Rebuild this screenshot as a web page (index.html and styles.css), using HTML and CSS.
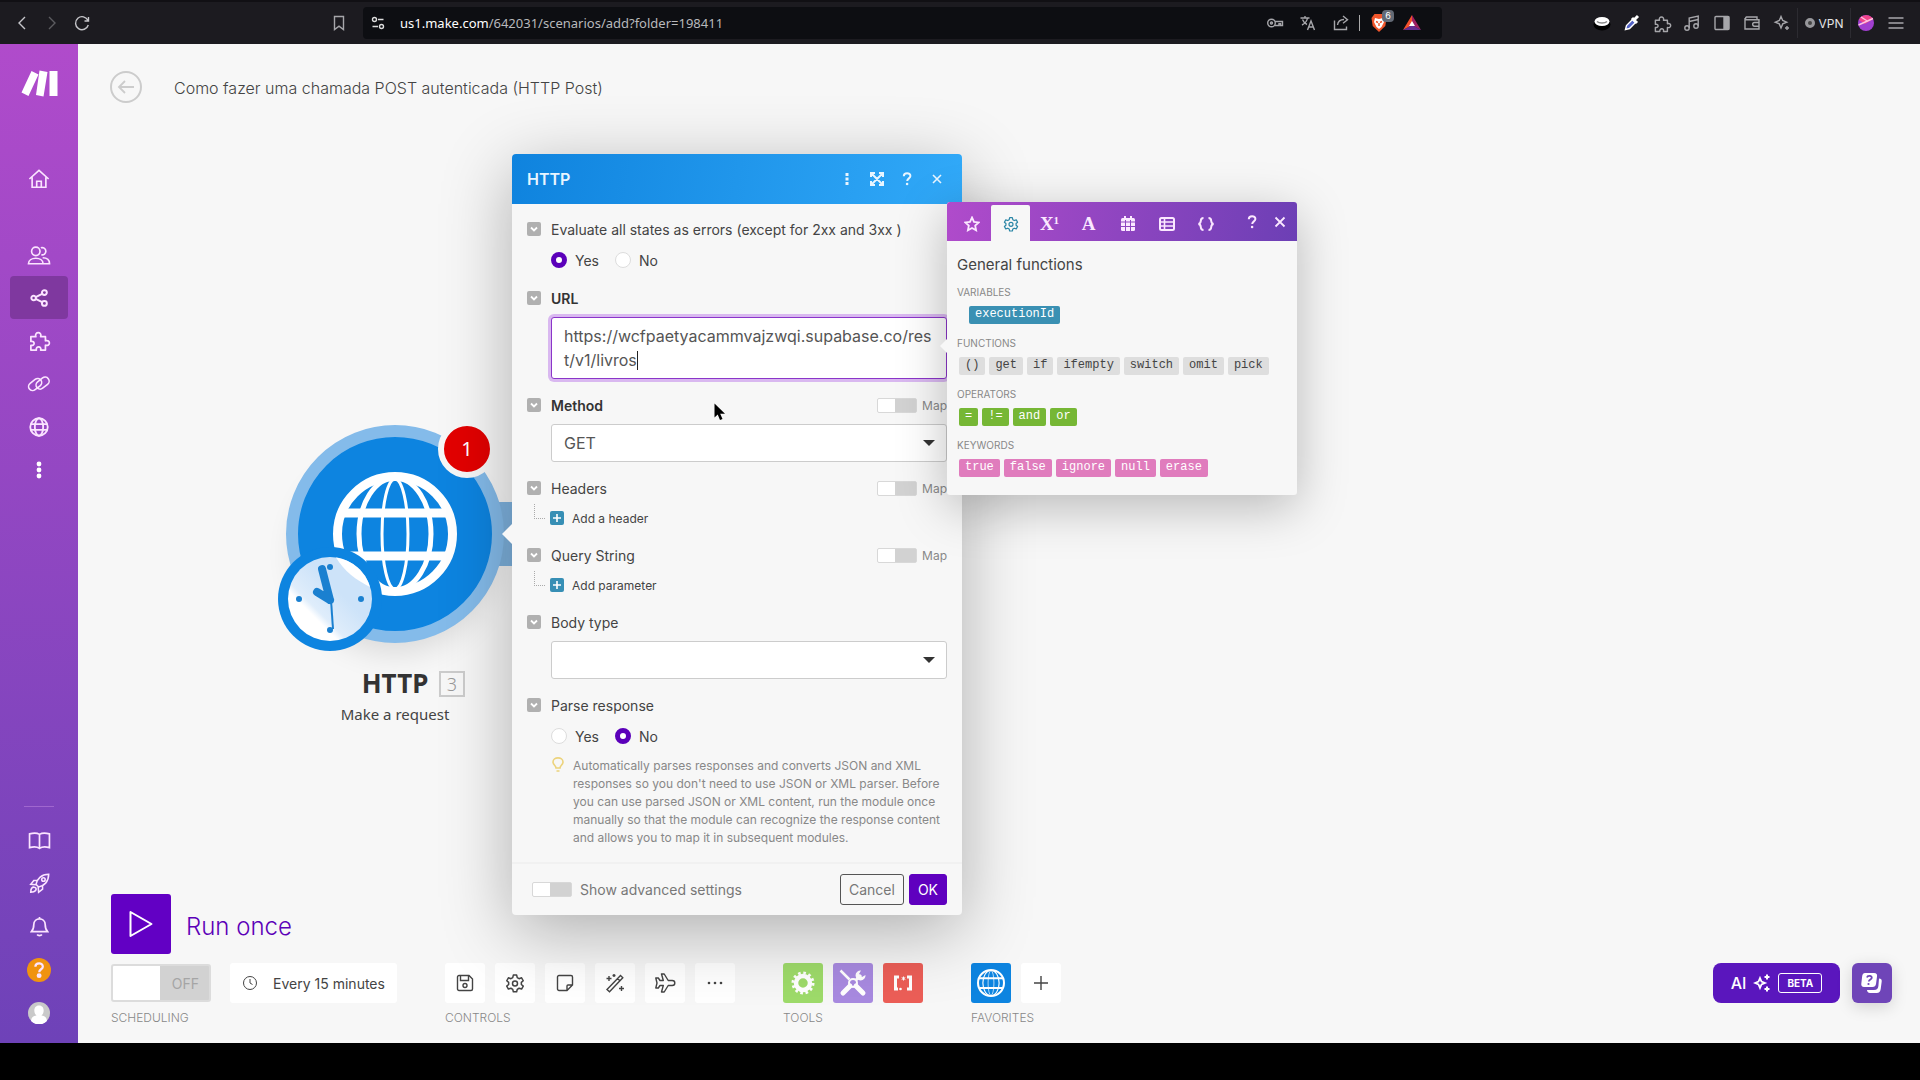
FILE: index.html
```html
<!DOCTYPE html>
<html lang="en">
<head>
    <meta charset="UTF-8">
    <meta name="viewport" content="width=device-width, initial-scale=1.0">
    <title>Como fazer uma chamada POST autenticada (HTTP Post)</title>
    <link rel="stylesheet" href="styles.css">
</head>
<body>
    <!-- shared icons -->
    <svg class="sprite" aria-hidden="true">
        <symbol id="i-chevron" viewBox="0 0 14 14"><path d="M4 5.5l3 3 3-3" fill="none" stroke="#fff" stroke-width="1.8"/></symbol>
        <symbol id="i-plus" viewBox="0 0 14 14"><path d="M7 3v8M3 7h8" fill="none" stroke="#fff" stroke-width="1.6"/></symbol>
        <symbol id="i-close" viewBox="0 0 16 16"><path d="M4 4l8 8M12 4l-8 8" fill="none" stroke="currentColor" stroke-width="1.6"/></symbol>
        <symbol id="i-question" viewBox="0 0 16 16"><path d="M4.8 5.2c0-4 6.6-4 6.6-.2 0 2.4-3.2 2.3-3.2 5" fill="none" stroke="currentColor" stroke-width="2"/><circle cx="8.1" cy="13" r="1.3" fill="currentColor"/></symbol>
        <symbol id="i-puzzle" viewBox="0 0 24 24"><path d="M3 8h5.200c-2-5.500 7-5.500 5 0h5v4.300c5.500-1.800 5.500 6.400 0 4.600V22h-5c1.500-4.500-5.500-4.500-4.500 0H3v-5c4.500 1.200 4.500-5.200 0-4z" fill="none" stroke="currentColor" stroke-width="1.800" stroke-linejoin="round"/></symbol>
        <symbol id="i-gear" viewBox="0 0 24 24"><path d="M10 2.500h4l.7 3 2.200 1.300 3-1 2 3.500-2.300 2v2.500l2.300 2-2 3.500-3-1-2.200 1.300-.7 2.900h-4l-.7-2.900-2.200-1.300-3 1-2-3.500 2.300-2v-2.500l-2.300-2 2-3.500 3 1 2.200-1.300z" fill="none" stroke="currentColor" stroke-width="1.800" stroke-linejoin="round"/><circle cx="12" cy="12.500" r="3" fill="none" stroke="currentColor" stroke-width="1.800"/></symbol>
        <symbol id="i-globe" viewBox="0 0 124 124">
            <g fill="none" stroke="currentColor">
                <circle cx="62" cy="62" r="57.500" stroke-width="9"/>
                <ellipse cx="62" cy="62" rx="36" ry="56" stroke-width="5"/>
                <ellipse cx="62" cy="62" rx="13" ry="55" stroke-width="3"/>
                <path d="M10 41h104M10 84h104" stroke-width="9"/>
            </g>
        </symbol>
    </svg>

    <header class="browser">
        <nav class="browser-nav">
            <button type="button" aria-label="Back"><svg width="16" height="18" viewBox="0 0 16 18"><path d="M11 3L5 9l6 6"/></svg></button>
            <button type="button" aria-label="Forward" class="dim"><svg width="16" height="18" viewBox="0 0 16 18"><path d="M5 3l6 6-6 6"/></svg></button>
            <button type="button" aria-label="Reload"><svg width="18" height="18" viewBox="0 0 18 18"><path d="M15 6.500A6.500 6.500 0 1 0 15.300 11M15.500 3v4h-4"/></svg></button>
        </nav>
        <button type="button" aria-label="Bookmark" class="bookmark"><svg width="18" height="18" viewBox="0 0 18 18"><path d="M4.500 2.500h9v13L9 12.200l-4.500 3.300z"/></svg></button>
        <div class="address">
            <svg class="tune" width="16" height="16" viewBox="0 0 16 16"><circle cx="4.500" cy="4.500" r="2"/><path d="M8 4.500h5.500M2.500 11.500H8"/><circle cx="11.500" cy="11.500" r="2"/></svg>
            <span class="url"><b>us1.make.com</b>/642031/scenarios/add?folder=198411</span>
            <div class="address-tools">
                <button type="button" aria-label="Passwords"><svg width="18" height="18" viewBox="0 0 18 18"><circle cx="5.500" cy="9" r="3.800"/><circle cx="5.500" cy="9" r="1"/><path d="M9 7.500h7.500v4h-2v-1.800h-1.500v1.800H9"/></svg></button>
                <button type="button" aria-label="Translate"><svg width="18" height="18" viewBox="0 0 18 18"><path d="M1.500 4h9M6 2v2M3 11c3-1.500 5-4 5.500-7M3.500 5.500c1 2.500 2.500 4 4.500 5M8.500 16l3.500-9 3.500 9M9.700 13h4.600"/></svg></button>
                <button type="button" aria-label="Share"><svg width="18" height="18" viewBox="0 0 18 18"><path d="M2.500 6.500v9h12v-3M5.500 11c.5-4 3-5.500 6.500-5.500M11 2l4.500 3.700-4.500 3.500"/></svg></button>
                <span class="address-sep"></span>
                <button type="button" aria-label="Brave Shields" class="shields">
                    <svg width="18" height="20" viewBox="0 0 18 20"><path d="M4.500 1h9l3 4-1.200 8L9 19l-6.300-6L1.500 5z" fill="#f1562b" stroke="none"/><path d="M5 5l4 1 4-1 1 4-2.500 5L9 16l-2.500-2L4 9z" fill="#fff" stroke="none"/><path d="M6 8.500l2 1M12 8.500l-2 1M9 10v3" stroke="#f1562b"/></svg>
                    <span class="shields-count">6</span>
                </button>
                <button type="button" aria-label="Rewards"><svg width="18" height="16" viewBox="0 0 18 16"><path d="M9 0L0 15l9-4.500z" fill="#f4512c" stroke="none"/><path d="M9 0l9 15-9-4.500z" fill="#9e1f63" stroke="none"/><path d="M0 15h18l-9-5z" fill="#662d91" stroke="none"/><path d="M9 6l3 5H6z" fill="#fff" stroke="none"/></svg></button>
            </div>
        </div>
        <div class="extensions">
            <button type="button" aria-label="Extension"><svg width="18" height="18" viewBox="0 0 18 18"><ellipse cx="9" cy="10.500" rx="8.500" ry="6" fill="#000" stroke="none"/><ellipse cx="9" cy="7.500" rx="7.500" ry="4.500" fill="#fff" stroke="none"/><path d="M4 7.500c2 2 8 2 10 0" stroke="#888"/></svg></button>
            <button type="button" aria-label="Color picker"><svg width="18" height="18" viewBox="0 0 18 18"><path d="M2.500 15.500l1-4 6-6 3 3-6 6z" fill="#5261c4" stroke="#fff"/><path d="M9 4l5 5M11 6l4-4" stroke="#fff" stroke-width="3"/></svg></button>
            <button type="button" aria-label="Extensions"><svg width="19" height="19"><use href="#i-puzzle"/></svg></button>
            <button type="button" aria-label="Media"><svg width="18" height="18" viewBox="0 0 18 18"><circle cx="4" cy="14" r="2.200"/><circle cx="13" cy="12" r="2.200"/><path d="M6.200 14V4l9-2v10M6.200 7.500l9-2"/></svg></button>
            <button type="button" aria-label="Side panel"><svg width="18" height="18" viewBox="0 0 18 18"><rect x="2" y="2.500" width="14" height="13" rx="1"/><path d="M11 3h4.500v12H11z" fill="#a6a6aa"/></svg></button>
            <button type="button" aria-label="Wallet"><svg width="18" height="18" viewBox="0 0 18 18"><path d="M14 5.500V3H3.500a1.500 1.500 0 0 0 0 2.800H16V15H2V4M16 8.500h-4.500a1.800 1.800 0 0 0 0 3.700H16"/></svg></button>
            <button type="button" aria-label="Leo AI"><svg width="18" height="18" viewBox="0 0 18 18"><path d="M8 2.500l1.700 4 4 1.700-4 1.700-1.700 4-1.700-4-4-1.700 4-1.700z"/><path d="M14 12v4M12 14h4"/></svg></button>
            <button type="button" class="vpn"><span class="vpn-dot"></span>VPN</button>
            <button type="button" aria-label="Profile"><svg width="18" height="18" viewBox="0 0 18 18"><circle cx="9" cy="9" r="8" fill="#a13fd0" stroke="none"/><path d="M2 6a8 8 0 0 1 14-1L8 10z" fill="#f0458b" stroke="none"/><path d="M1.500 11L16 4.500M4 3l7 4.500" stroke="#ffc2e0"/></svg></button>
            <button type="button" aria-label="Menu"><svg width="18" height="18" viewBox="0 0 18 18"><path d="M1.500 4h15M1.500 9h15M1.500 14h15"/></svg></button>
        </div>
    </header>

    <div class="app">
        <aside class="sidebar">
            <a href="#" class="logo" aria-label="Make"><svg width="37" height="27" viewBox="0 0 37 27"><path d="M10.500 1l7 3.400L7.500 26 0.500 22.500zM18.500 .5l8 1.500L22.500 26.500l-7.500-1.500zM28.500 1h8v25h-8z" fill="#fff"/></svg></a>
            <nav class="side-nav">
                <a href="#" class="home" aria-label="Home"><svg width="22" height="22" viewBox="0 0 24 24"><path d="M1.500 12L12 2.500 22.500 12M4.500 10v11h15V10M9.500 21v-6.500h5V21"/></svg></a>
                <a href="#" aria-label="Team"><svg width="24" height="22" viewBox="0 0 26 24"><circle cx="9.500" cy="8" r="4.600"/><path d="M15 4.200a4 4 0 1 1 .5 7.600M1.500 21.500c0-8 16-8 16 0zM17 15c4.500 0 7.500 2 7.500 6.500h-7"/></svg></a>
                <a href="#" class="active" aria-label="Scenarios"><svg width="18" height="18" viewBox="0 0 20 20"><g stroke-width="2.200"><circle cx="4" cy="10" r="2.500"/><circle cx="16" cy="4" r="2.700"/><circle cx="16" cy="16" r="2.700"/><path d="M6.300 9l7.200-3.600M6.300 11l7.200 3.700"/></g></svg></a>
                <a href="#" aria-label="Templates"><svg width="23" height="23"><use href="#i-puzzle"/></svg></a>
                <a href="#" aria-label="Connections"><svg width="24" height="18" viewBox="0 0 26 20"><rect x="1" y="6" width="16" height="9" rx="4.500" transform="rotate(-38 9 11)"/><rect x="9" y="4.500" width="16" height="9" rx="4.500" transform="rotate(-38 17 9)"/></svg></a>
                <a href="#" aria-label="Webhooks"><svg width="20" height="20" viewBox="0 0 24 24"><g stroke-width="2.200"><circle cx="12" cy="12" r="10.500"/><ellipse cx="12" cy="12" rx="5" ry="10.500"/><path d="M2 8.500h20M2 15.500h20"/></g></svg></a>
                <a href="#" aria-label="More"><svg width="6" height="18" viewBox="0 0 6 18"><g fill="#fff" stroke="none"><circle cx="3" cy="3" r="2.400"/><circle cx="3" cy="9" r="2.400"/><circle cx="3" cy="15" r="2.400"/></g></svg></a>
            </nav>
            <nav class="side-nav side-bottom">
                <a href="#" aria-label="Docs"><svg width="23" height="18" viewBox="0 0 24 19"><path d="M1.500 2c4-1 8-1 10.500.5C14.500 1 18.500 1 22.500 2v14.500c-4-1-8-1-10.500.8-2.500-1.800-6.500-1.800-10.500-.8zM12 2.500v14.500"/></svg></a>
                <a href="#" aria-label="What's new"><svg width="21" height="21" viewBox="0 0 24 24"><path d="M8 13C9 7 14 1.500 22.500 1.500 22.500 10 17 15 11 16zM9 8.500H5.500L2 13l6 .5M15.500 15v3.500L11 22l-.5-6M3 17.500c1.500-2 4.500-1.500 5 0s0 4-6 4.500c0-2 .3-3.500 1-4.500z"/><circle cx="16.500" cy="7.500" r="2"/></svg></a>
                <a href="#" aria-label="Notifications"><svg width="19" height="21" viewBox="0 0 20 22"><path d="M1.500 16.500C4 14 4 12 4 9c0-8 12-8 12 0 0 3 0 5 2.500 7.500zM10 1v1.500M7.500 19.500c1 1.500 4 1.500 5 0"/></svg></a>
                <a href="#" class="help" aria-label="Help"><span><svg width="18" height="18"><use href="#i-question"/></svg></span></a>
                <a href="#" aria-label="Profile"><svg width="22" height="22" viewBox="0 0 22 22"><g stroke="none"><circle cx="11" cy="11" r="11" fill="#c9c9c9"/><path d="M11 3.500c6 0 5.500 8 2.500 10 3 .5 5 1.500 5.500 5.500a11 11 0 0 1-16 0c.5-4 2.500-5 5.500-5.500-3-2-3.500-10 2.500-10z" fill="#fff"/></g></svg></a>
            </nav>
        </aside>

        <main class="canvas">
            <div class="title-bar">
                <a href="#" class="back" aria-label="Back"><svg width="18" height="16" viewBox="0 0 18 16"><path d="M17 8H2M8 2L2 8l6 6" fill="none" stroke="currentColor" stroke-width="1.800"/></svg></a>
                <h1>Como fazer uma chamada POST autenticada (HTTP Post)</h1>
            </div>

            <!-- module node on the scenario canvas -->
            <div class="module">
                <div class="module-link"></div>
                <div class="module-circle"><svg width="124" height="124"><use href="#i-globe"/></svg></div>
                <svg class="module-clock" width="104" height="104" viewBox="0 0 104 104">
                    <defs><linearGradient id="shine" x1="0" y1="1" x2="1" y2="0"><stop offset=".3" stop-color="#fff"/><stop offset=".36" stop-color="#dfedfb"/><stop offset=".6" stop-color="#cde3f9"/></linearGradient></defs>
                    <circle cx="52" cy="52" r="52" fill="#0d84e0"/>
                    <circle cx="52" cy="52" r="42" fill="url(#shine)"/>
                    <path d="M58 10.500A42 42 0 0 1 92 40C78 33 66 24 58 10.500z" fill="#fff"/>
                    <g fill="#1a80d0"><circle cx="52" cy="20" r="3"/><circle cx="21" cy="52" r="3"/><circle cx="83" cy="52" r="3"/><circle cx="52" cy="83" r="3"/></g>
                    <path d="M52 53L44 22M52 53L39 45" stroke="#1a80d0" stroke-width="8" stroke-linecap="round"/>
                    <path d="M53 53l2 29" stroke="#1a80d0" stroke-width="2"/>
                </svg>
                <span class="module-alert">1</span>
                <div class="module-name">HTTP<span class="module-number">3</span></div>
                <div class="module-desc">Make a request</div>
            </div>

            <section class="dialog">
                <header class="dialog-header">
                    <h2>HTTP</h2>
                    <button type="button" aria-label="More"><svg width="16" height="16" viewBox="0 0 16 16"><path d="M6.500 2h3v3h-3zM6.500 6.500h3v3h-3zM6.500 11h3v3h-3z" fill="currentColor"/></svg></button>
                    <button type="button" aria-label="Expand"><svg width="16" height="16" viewBox="0 0 16 16"><path d="M2 6V2h4M10 2h4v4M14 10v4h-4M6 14H2v-4M3 3l10 10M13 3L3 13" fill="none" stroke="currentColor" stroke-width="2"/></svg></button>
                    <button type="button" aria-label="Help"><svg width="16" height="16"><use href="#i-question"/></svg></button>
                    <button type="button" aria-label="Close"><svg width="16" height="16"><use href="#i-close"/></svg></button>
                </header>

                <form class="dialog-body">
                    <div class="field">
                        <div class="field-head"><button type="button" class="collapse" aria-label="Collapse"><svg><use href="#i-chevron"/></svg></button><span class="label">Evaluate all states as errors (except for 2xx and 3xx )</span></div>
                        <div class="radios">
                            <label><input type="radio" name="errors" checked>Yes</label>
                            <label><input type="radio" name="errors">No</label>
                        </div>
                    </div>
                    <div class="field">
                        <div class="field-head"><button type="button" class="collapse" aria-label="Collapse"><svg><use href="#i-chevron"/></svg></button><label class="label required" for="url">URL</label></div>
                        <div class="control">
                            <textarea id="url" rows="2" spellcheck="false">https://wcfpaetyacammvajzwqi.supabase.co/rest/v1/livros</textarea>
                            <span class="caret"></span>
                        </div>
                    </div>
                    <div class="field">
                        <div class="field-head"><button type="button" class="collapse" aria-label="Collapse"><svg><use href="#i-chevron"/></svg></button><label class="label required" for="method">Method</label><label class="map"><input type="checkbox" class="switch">Map</label></div>
                        <div class="control select">
                            <select id="method"><option>GET</option><option>POST</option><option>PUT</option><option>DELETE</option></select>
                        </div>
                    </div>
                    <div class="field">
                        <div class="field-head"><button type="button" class="collapse" aria-label="Collapse"><svg><use href="#i-chevron"/></svg></button><span class="label">Headers</span><label class="map"><input type="checkbox" class="switch">Map</label></div>
                        <button type="button" class="add"><svg><use href="#i-plus"/></svg>Add a header</button>
                    </div>
                    <div class="field">
                        <div class="field-head"><button type="button" class="collapse" aria-label="Collapse"><svg><use href="#i-chevron"/></svg></button><span class="label">Query String</span><label class="map"><input type="checkbox" class="switch">Map</label></div>
                        <button type="button" class="add"><svg><use href="#i-plus"/></svg>Add parameter</button>
                    </div>
                    <div class="field">
                        <div class="field-head"><button type="button" class="collapse" aria-label="Collapse"><svg><use href="#i-chevron"/></svg></button><label class="label" for="bodyType">Body type</label></div>
                        <div class="control select">
                            <select id="bodyType"><option></option><option>Raw</option></select>
                        </div>
                    </div>
                    <div class="field">
                        <div class="field-head"><button type="button" class="collapse" aria-label="Collapse"><svg><use href="#i-chevron"/></svg></button><span class="label">Parse response</span></div>
                        <div class="radios">
                            <label><input type="radio" name="parse">Yes</label>
                            <label><input type="radio" name="parse" checked>No</label>
                        </div>
                        <div class="hint">
                            <svg width="12" height="16" viewBox="0 0 12 16"><path d="M4 11C4 8.500 1 8 1 5c0-5.500 10-5.500 10 0 0 3-3 3.500-3 6zM4.500 14h3" fill="none" stroke="#ecd37c" stroke-width="1.600"/></svg>
                            <p>Automatically parses responses and converts JSON and XML responses so you don't need to use JSON or XML parser. Before you can use parsed JSON or XML content, run the module once manually so that the module can recognize the response content and allows you to map it in subsequent modules.</p>
                        </div>
                    </div>
                </form>

                <footer class="dialog-footer">
                    <label class="advanced"><input type="checkbox" class="switch">Show advanced settings</label>
                    <button type="button" class="btn">Cancel</button>
                    <button type="button" class="btn btn-primary">OK</button>
                </footer>

                <!-- mapping panel -->
                <div class="panel">
                    <div class="panel-tabs">
                        <button type="button" aria-label="Favorites"><svg width="16" height="16" viewBox="0 0 16 16"><path d="M8 1.500l2 4.300 4.700.6-3.500 3.200.9 4.700L8 12l-4.100 2.300.9-4.700L1.300 6.400 6 5.800z" fill="none" stroke="currentColor" stroke-width="1.800"/></svg></button>
                        <button type="button" class="active" aria-label="General"><svg width="16" height="16"><use href="#i-gear"/></svg></button>
                        <button type="button" aria-label="Math">X<sup>1</sup></button>
                        <button type="button" aria-label="Text">A</button>
                        <button type="button" aria-label="Date"><svg width="14" height="16" viewBox="0 0 14 16"><path d="M4 0v4M10 0v4" stroke="currentColor" stroke-width="2"/><rect x="0" y="2" width="14" height="13" rx="1.500" fill="currentColor"/><path d="M0 6h14M0 10.500h14M4.500 4v11M9.500 4v11" stroke="#8f46c2"/></svg></button>
                        <button type="button" aria-label="Array"><svg width="16" height="14" viewBox="0 0 16 14"><rect x="1" y="1" width="14" height="12" rx="1.500" fill="none" stroke="currentColor" stroke-width="2"/><path d="M1 5h14M1 9h14M5.500 1v12" stroke="currentColor" stroke-width="1.600"/></svg></button>
                        <button type="button" aria-label="Custom"><svg width="18" height="14" viewBox="0 0 18 14"><path d="M6.500 1C1.500 1 6 6 1.500 7c4.500 1 0 6 5 6M11.500 1c5 0 .5 5 5 6-4.500 1 0 6-5 6" fill="none" stroke="currentColor" stroke-width="2"/></svg></button>
                        <div class="panel-actions">
                            <button type="button" aria-label="Help"><svg width="16" height="16"><use href="#i-question"/></svg></button>
                            <button type="button" aria-label="Close"><svg width="18" height="18"><use href="#i-close"/></svg></button>
                        </div>
                    </div>
                    <div class="panel-body">
                        <h3>General functions</h3>
                        <h4>Variables</h4>
                        <div class="tags variables"><code>executionId</code></div>
                        <h4>Functions</h4>
                        <div class="tags functions"><code>()</code><code>get</code><code>if</code><code>ifempty</code><code>switch</code><code>omit</code><code>pick</code></div>
                        <h4>Operators</h4>
                        <div class="tags operators"><code>=</code><code>!=</code><code>and</code><code>or</code></div>
                        <h4>Keywords</h4>
                        <div class="tags keywords"><code>true</code><code>false</code><code>ignore</code><code>null</code><code>erase</code></div>
                    </div>
                </div>

                <svg class="cursor" width="12" height="18" viewBox="0 0 12 18"><path d="M.5.5v14l3.200-3 2.300 5.500 2.500-1-2.300-5.300h4.800z" fill="#000"/></svg>
            </section>

            <footer class="toolbar">
                <button type="button" class="run"><span class="run-icon"><svg width="26" height="28" viewBox="0 0 26 28"><path d="M2.500 2v24L23.500 14z" fill="none" stroke="#fff" stroke-width="2" stroke-linejoin="round"/></svg></span><span class="run-text">Run once</span></button>
                <div class="groups">
                    <div class="group">
                        <div class="group-items">
                            <label class="schedule"><input type="checkbox"><span>OFF</span></label>
                            <button type="button" class="interval"><svg width="16" height="16" viewBox="0 0 16 16"><circle cx="8" cy="8" r="6.500"/><path d="M8 4V8l2.500 1.500"/></svg>Every 15 minutes</button>
                        </div>
                        <span class="group-label">Scheduling</span>
                    </div>
                    <div class="group">
                        <div class="group-items">
                            <button type="button" class="tile" aria-label="Save"><svg width="18" height="18" viewBox="0 0 18 18"><path d="M1.500 3A1.500 1.500 0 0 1 3 1.500h10L16.500 5v10a1.500 1.500 0 0 1-1.500 1.500H3A1.500 1.500 0 0 1 1.500 15zM4.500 2v4.500h8V2"/><circle cx="9" cy="11.500" r="2"/></svg></button>
                            <button type="button" class="tile" aria-label="Settings"><svg width="20" height="20"><use href="#i-gear"/></svg></button>
                            <button type="button" class="tile" aria-label="Notes"><svg width="18" height="18" viewBox="0 0 18 18"><path d="M3 1.500h12A1.500 1.500 0 0 1 16.500 3v8l-5.500 5.500H3A1.500 1.500 0 0 1 1.500 15V3A1.500 1.500 0 0 1 3 1.500zM16.500 11H12a1 1 0 0 0-1 1v4.500"/></svg></button>
                            <button type="button" class="tile" aria-label="Auto-align"><svg width="20" height="20" viewBox="0 0 20 20"><path d="M2 16.500L15.500 2.500l2.300 2.200L4.500 18.700zM12.500 5.500l2.400 2.300M4 3v5M1.500 5.500h5M9 1v3M7.500 2.500h3M16.500 13v5M14 15.500h5"/></svg></button>
                            <button type="button" class="tile" aria-label="Explain flow"><svg width="22" height="20" viewBox="0 0 22 20"><path d="M7.500 1h2.700l4 6.500h4c3.500 0 3.500 5 0 5h-4l-4 6.500H7.500L9.300 12.500H6L4.300 15H1.800L3 10 1.800 5h2.500L6 7.500h3.300z" stroke-linejoin="round"/></svg></button>
                            <button type="button" class="tile" aria-label="More"><svg width="16" height="4" viewBox="0 0 16 4"><g fill="#444" stroke="none"><circle cx="2" cy="2" r="1.300"/><circle cx="8" cy="2" r="1.300"/><circle cx="14" cy="2" r="1.300"/></g></svg></button>
                        </div>
                        <span class="group-label">Controls</span>
                    </div>
                    <div class="group">
                        <div class="group-items">
                            <button type="button" class="tile green" aria-label="Flow control"><svg width="24" height="24" viewBox="0 0 24 24"><circle cx="12" cy="12" r="7" stroke-width="4.500"/><circle cx="12" cy="12" r="10" stroke-width="3" stroke-dasharray="2.600 2.636"/></svg></button>
                            <button type="button" class="tile violet" aria-label="Tools"><svg width="28" height="28" viewBox="0 0 28 28"><path d="M1.500 1.500l9 9" stroke-width="2.500"/><path d="M17 17l7 7M11 17l-7 7" stroke-width="5" stroke-linecap="round"/><path d="M17 11l5-5" stroke-width="3"/><circle cx="14" cy="14" r="4" stroke-width="2"/><path d="M22 1.500a5 5 0 1 0 4.500 4.500L23 8l-3-3z" fill="#fff" stroke="none"/></svg></button>
                            <button type="button" class="tile red" aria-label="Text parser"><svg width="20" height="16" viewBox="0 0 20 16"><path d="M6 2H2.500v12H5M14 2h3.500v12H14" stroke-width="3"/><circle cx="7.500" cy="14" r="1.300" fill="#fff" stroke="none"/><path d="M10.500 1.500v4M8.700 2.500l3.600 2M12.300 2.500l-3.600 2" stroke-width="1"/></svg></button>
                        </div>
                        <span class="group-label">Tools</span>
                    </div>
                    <div class="group">
                        <div class="group-items">
                            <button type="button" class="tile blue" aria-label="HTTP"><svg width="28" height="28"><use href="#i-globe"/></svg></button>
                            <button type="button" class="tile" aria-label="Add favorite"><svg width="16" height="16" viewBox="0 0 16 16"><path d="M8 1v14M1 8h14"/></svg></button>
                        </div>
                        <span class="group-label">Favorites</span>
                    </div>
                    <div class="assist">
                        <button type="button" class="ai">AI<svg width="18" height="18" viewBox="0 0 18 18"><path d="M7 4l1.500 3.500L12 9l-3.500 1.500L7 14l-1.500-3.500L2 9l3.500-1.500z" fill="none" stroke="#fff" stroke-width="1.800"/><path d="M14 .5v5M11.500 3h5M14 12.500v5M11.500 15h5" stroke="#fff" stroke-width="2"/></svg><span class="beta">BETA</span></button>
                        <button type="button" class="support" aria-label="Support"><svg width="22" height="22" viewBox="0 0 22 22"><path d="M18 6.500c2 0 3 1 2.700 3l-1 7.500c-.4 2.500-1.500 4-4 4H9c-2 0-3-1.500-3-3h7c3 0 4-1.500 4.400-4z" fill="#fff"/><path d="M4 1h9c2.500 0 3.400 1.300 3 3.500l-1 7.500c-.3 2-1.500 3-3.500 3H3c-2 0-3-1.200-2.700-3.200L1.200 4C1.500 2 2.500 1 4 1z" fill="#fff"/><path d="M6 5.500c.5-2.500 5.500-2 4.700.5-.4 1.600-2.700 1.500-2.900 3.500" fill="none" stroke="#6f45b8" stroke-width="1.800"/><circle cx="7.500" cy="12" r="1.100" fill="#6f45b8"/></svg></button>
                    </div>
                </div>
            </footer>
        </main>
    </div>

    <div class="taskbar"></div>
</body>
</html>
```

FILE: styles.css
```css
* {
    margin: 0;
    padding: 0;
    box-sizing: border-box;
}

body {
    display: flex;
    flex-direction: column;
    min-height: 100vh;
    font-family: Inter, "Liberation Sans", sans-serif;
    color: #444;
    background: #000;
}

button {
    display: inline-flex;
    align-items: center;
    justify-content: center;
    font: inherit;
    color: inherit;
    background: none;
    border: none;
    cursor: pointer;
}

a {
    color: inherit;
    text-decoration: none;
}

.sprite {
    position: absolute;
    width: 0;
    height: 0;
}

/* browser chrome */
.browser {
    display: flex;
    align-items: center;
    height: 44px;
    padding: 0 9px 0 7px;
    background: #1c1b20;
    border-top: 2px solid #111014;
    color: #a6a6aa;
}

.browser svg {
    fill: none;
    stroke: currentColor;
    stroke-width: 1.4;
}

.browser button {
    width: 30px;
    height: 30px;
}

.browser-nav {
    display: flex;
    color: #c6c6ca;
}

.browser-nav .dim {
    color: #5c5c60;
}

.browser .bookmark {
    margin: 0 9px 0 227px;
}

.address {
    flex: 1;
    display: flex;
    align-items: center;
    height: 32px;
    padding: 0 14px 0 7px;
    background: #0d0e12;
    border-radius: 4px;
}

.address .tune {
    margin-right: 14px;
    color: #ddd;
}

.url {
    flex: 1;
    font-family: "Noto Sans", sans-serif;
    font-size: 13px;
    color: #b8b9bc;
}

.url b {
    font-weight: 400;
    color: #fff;
}

.address-tools {
    display: flex;
    align-items: center;
}

.address-tools button {
    width: 33px;
    position: relative;
}

.address-sep {
    width: 1px;
    height: 16px;
    margin: 0 2px;
    background: #aaa;
}

.shields-count {
    position: absolute;
    top: 2px;
    right: 1px;
    width: 12px;
    height: 12px;
    font-size: 9px;
    line-height: 12px;
    color: #fff;
    background: #636a75;
    border-radius: 4px;
}

.extensions {
    display: flex;
    align-items: center;
    margin-left: 145px;
}

.browser .vpn {
    width: 54px;
    gap: 4px;
    border: 1px solid #2c2b31;
    border-width: 0 1px;
    font-size: 12px;
    color: #e4e4e6;
}

.vpn-dot {
    width: 10px;
    height: 10px;
    border: 3px solid #97979b;
    background: #444;
    border-radius: 50%;
}

/* layout */
.app {
    flex: 1;
    display: flex;
}

.taskbar {
    height: 37px;
    background: #000;
}

/* sidebar */
.sidebar {
    display: flex;
    flex-direction: column;
    width: 78px;
    padding: 26px 10px 9px;
    background: linear-gradient(180deg, #b04bcb 0%, #6e42b8 100%);
}

.logo {
    display: flex;
    justify-content: center;
    height: 27px;
}

.side-nav {
    display: flex;
    flex-direction: column;
    margin-top: 60px;
}

.side-nav a {
    display: flex;
    align-items: center;
    justify-content: center;
    height: 43px;
    border-radius: 4px;
    color: #fbe4ff;
}

.side-nav svg {
    fill: none;
    stroke: currentColor;
    stroke-width: 1.8;
}

.side-nav .home {
    margin-bottom: 33px;
}

.side-nav .active {
    background: #7f389f;
}

.side-bottom {
    margin-top: auto;
}

.side-bottom::before {
    content: "";
    width: 30px;
    height: 1px;
    margin: 0 auto 12px;
    background: #a067cf;
}

.help span {
    display: flex;
    align-items: center;
    justify-content: center;
    width: 24px;
    height: 24px;
    background: #f0930f;
    border-radius: 50%;
}

/* canvas */
.canvas {
    position: relative;
    flex: 1;
    display: flex;
    flex-direction: column;
    justify-content: space-between;
    background: #f7f7f7;
}

.title-bar {
    display: flex;
    align-items: center;
    gap: 32px;
    padding: 27px 32px;
}

.back {
    display: flex;
    align-items: center;
    justify-content: center;
    width: 32px;
    height: 32px;
    border: 2px solid #ccc;
    border-radius: 50%;
    color: #ccc;
}

.title-bar h1 {
    padding-top: 2px;
    font-size: 16px;
    font-weight: 300;
    color: #444;
}

/* module */
.module {
    position: absolute;
    left: 208px;
    top: 381px;
    width: 218px;
    font-family: "Noto Sans", sans-serif;
    text-align: center;
}

.module-circle {
    position: relative;
    display: flex;
    align-items: center;
    justify-content: center;
    width: 218px;
    height: 218px;
    background: #0d84e0;
    border: 12px solid #84bbea;
    border-radius: 50%;
    color: #fff;
    box-shadow: 0 20px 30px -10px rgba(0, 0, 0, 0.12);
}

.module-link {
    position: absolute;
    left: 200px;
    top: 77px;
    width: 40px;
    height: 64px;
    background: #80b5e2;
}

.module-clock {
    position: absolute;
    left: -8px;
    top: 122px;
}

.module-alert {
    position: absolute;
    right: 8px;
    top: -5px;
    width: 58px;
    height: 58px;
    border: 6px solid #f7f7f7;
    background: #e30000;
    border-radius: 50%;
    font-size: 20px;
    line-height: 46px;
    color: #fff;
}

.module-name {
    position: relative;
    margin-top: 22px;
    font-size: 26px;
    line-height: 36px;
    font-weight: 700;
    color: #333;
}

.module-number {
    position: absolute;
    left: 153px;
    top: 6px;
    width: 26px;
    height: 26px;
    border: 2px solid #ccc;
    font-size: 18px;
    line-height: 22px;
    font-weight: 300;
    color: #999;
}

.module-desc {
    margin-top: 1px;
    font-size: 15px;
    line-height: 24px;
}

/* dialog */
.dialog {
    position: absolute;
    left: 434px;
    top: 110px;
    width: 450px;
    background: #f7f7f7;
    border-radius: 4px;
    box-shadow: 0 16px 70px rgba(0, 0, 0, 0.3);
}

/* pointer to the module */
.dialog::before {
    content: "";
    position: absolute;
    left: -10px;
    top: 370px;
    border: 10px solid transparent;
    border-left: none;
    border-right-color: #f7f7f7;
}

.dialog-header {
    display: flex;
    align-items: center;
    height: 50px;
    padding: 0 10px 1px 15px;
    border-radius: 4px 4px 0 0;
    background: linear-gradient(100deg, #0f83de 0%, #31a9f8 100%);
    color: #e8f5ff;
}

.dialog-header h2 {
    flex: 1;
    font-size: 16px;
    font-weight: 600;
}

.dialog-header button {
    width: 30px;
    height: 30px;
}

.dialog-body {
    display: flex;
    flex-direction: column;
    gap: 17px;
    padding: 16px 15px 15px;
}

.field-head {
    display: flex;
    align-items: center;
    height: 18px;
    font-size: 14px;
}

.collapse {
    width: 14px;
    height: 14px;
    margin-right: 10px;
    background: #b0b0b0;
    border-radius: 2px;
}

.collapse svg,
.add svg {
    width: 14px;
    height: 14px;
}

.label {
    flex: 1;
    color: #444;
}

.required {
    font-weight: 600;
    color: #333;
}

.radios {
    display: flex;
    gap: 16px;
    margin: 12px 0 2px 24px;
}

.radios label {
    display: flex;
    align-items: center;
    gap: 8px;
    height: 20px;
    font-size: 14px;
}

.radios input {
    appearance: none;
    width: 16px;
    height: 16px;
    border: 1px solid #ddd;
    border-radius: 50%;
    background: #fff;
}

.radios input:checked {
    border: 5px solid #5b00ba;
}

.control {
    position: relative;
    margin: 10px 0 0 24px;
}

.control textarea,
.control select {
    display: block;
    appearance: none;
    width: 100%;
    border: 1px solid #ccc;
    border-radius: 3px;
    background: #fff;
    font-family: inherit;
    font-size: 16px;
    color: #555;
    outline: none;
}

.control textarea {
    height: 62px;
    padding: 6px 12px;
    border-color: #8b35c9;
    box-shadow: 0 0 0 3px #d9b8f0;
    line-height: 24px;
    word-break: break-all;
    resize: none;
    overflow: hidden;
}

.control select {
    height: 38px;
    padding: 0 12px;
}

.select::after {
    content: "";
    position: absolute;
    right: 12px;
    top: 16px;
    border: 6px solid transparent;
    border-top-color: #333;
    border-bottom: none;
}

.caret {
    position: absolute;
    left: 86px;
    top: 34px;
    width: 1px;
    height: 19px;
    background: #222;
}

.map {
    display: flex;
    align-items: center;
    gap: 5px;
    font-size: 12px;
    color: #888;
}

.switch {
    appearance: none;
    width: 40px;
    height: 15px;
    border: 1px solid #d8d8d8;
    border-radius: 2px;
    background: linear-gradient(90deg, #fff 45%, #d2d2d2 45%);
}

.add {
    position: relative;
    height: 20px;
    margin: 11px 0 0 23px;
    gap: 8px;
    font-size: 12px;
    color: #444;
}

.add svg {
    background: #378fb5;
    border-radius: 2px;
}

.add::before {
    content: "";
    position: absolute;
    left: -16px;
    top: -4px;
    width: 10px;
    height: 14px;
    border: 1px dotted #aaa;
    border-width: 0 0 1px 1px;
}

.hint {
    display: flex;
    gap: 9px;
    margin: 11px 0 0 25px;
    font-size: 12px;
    line-height: 18px;
    color: #888;
}

.hint svg {
    flex: none;
}

.dialog-footer {
    display: flex;
    align-items: center;
    padding: 10px 15px 10px 20px;
    border-top: 2px solid #f1f1f1;
}

.advanced {
    flex: 1;
    display: flex;
    align-items: center;
    gap: 8px;
    font-size: 14px;
    color: #777;
}

.btn {
    height: 31px;
    padding: 0 8px;
    border: 1px solid #555;
    border-radius: 3px;
    font-size: 14px;
    color: #777;
}

.btn-primary {
    margin-left: 5px;
    background: #5f00bf;
    border-color: #5f00bf;
    color: #fff;
}

.cursor {
    position: absolute;
    left: 202px;
    top: 249px;
}

/* mapping panel */
.panel {
    position: absolute;
    left: 435px;
    top: 48px;
    width: 350px;
    background: #f7f7f7;
    border-radius: 3px;
    box-shadow: 0 12px 50px rgba(0, 0, 0, 0.26);
}

.panel::before {
    content: "";
    position: absolute;
    left: -7px;
    top: 137px;
    border: 7px solid transparent;
    border-left: none;
    border-right-color: #f7f7f7;
}

.panel-tabs {
    display: flex;
    align-items: flex-end;
    height: 39px;
    padding: 0 3px 0 5px;
    border-radius: 3px 3px 0 0;
    background: linear-gradient(100deg, #b04bcb 0%, #6c3fb5 100%);
    color: #fbe8ff;
}

.panel-tabs > button {
    width: 39px;
    height: 36px;
    padding-top: 1px;
    border-radius: 2px 2px 0 0;
    font-family: "Liberation Serif", serif;
    font-size: 19px;
    font-weight: 700;
}

.panel-tabs sup {
    font-size: 11px;
    line-height: 10px;
    align-self: flex-start;
    margin-top: 9px;
}

.panel-tabs .active {
    background: #f7f7f7;
    color: #2a86a6;
}

.panel-actions {
    display: flex;
    align-items: center;
    margin-left: auto;
    height: 39px;
}

.panel-actions button {
    width: 28px;
    height: 28px;
}

.panel-body {
    padding: 14px 10px 18px;
}

.panel-body h3 {
    margin-bottom: 8px;
    font-size: 15px;
    line-height: 20px;
    font-weight: 400;
}

.panel-body h4 {
    font-size: 10px;
    line-height: 18px;
    font-weight: 400;
    text-transform: uppercase;
    color: #888;
}

.tags {
    display: flex;
    gap: 4px;
    padding: 5px 2px 10px;
}

.tags:last-child {
    padding-bottom: 0;
}

.tags code {
    height: 18px;
    padding: 0 6px;
    border-radius: 2px;
    font-family: "Liberation Mono", monospace;
    font-size: 12px;
    line-height: 17px;
    color: #fff;
}

.tags.variables {
    padding-left: 12px;
}

.variables code {
    background: #3a90b3;
}

.functions code {
    background: #dedede;
    color: #444;
}

.operators code {
    background: #76b735;
}

.keywords code {
    background: #e07cbd;
}

/* bottom toolbar */
.toolbar {
    padding: 0 28px 16px 33px;
}

.run {
    gap: 15px;
    font-size: 24px;
    font-weight: 300;
    color: #5c00b8;
}

.run-icon {
    display: flex;
    align-items: center;
    justify-content: center;
    width: 60px;
    height: 60px;
    background: #6200c4;
    border-radius: 3px;
}

.run-text {
    padding-top: 5px;
}

.groups {
    display: flex;
    gap: 48px;
    margin-top: 9px;
}

.group-items {
    display: flex;
    gap: 10px;
    height: 40px;
}

.group-label {
    display: block;
    margin-top: 6px;
    font-size: 12px;
    line-height: 18px;
    font-weight: 300;
    text-transform: uppercase;
    color: #888;
}

.group svg {
    fill: none;
    stroke: currentColor;
    stroke-width: 1.4;
}

.schedule {
    position: relative;
    display: flex;
    align-items: center;
    margin-right: 9px;
    font-size: 14px;
}

.schedule input {
    appearance: none;
    width: 100px;
    height: 38px;
    border: 2px solid #dcdcdc;
    border-radius: 3px;
    background: linear-gradient(90deg, #fff 49%, #d2d2d2 49%);
}

.schedule span {
    position: absolute;
    right: 12px;
    color: #a5a5a5;
}

.interval {
    width: 167px;
    gap: 15px;
    background: #fff;
    border-radius: 3px;
    font-size: 14px;
}

.group .interval svg {
    stroke-width: 1;
}

.tile {
    width: 40px;
    height: 40px;
    background: #fff;
    border-radius: 3px;
}

.green,
.violet,
.red,
.blue {
    color: #fff;
}

.green {
    background: #9edb6a;
}

.violet {
    background: #a88ae0;
}

.red {
    background: #ec5e57;
}

.blue {
    background: #0d84e0;
}

.assist {
    display: flex;
    gap: 12px;
    height: 40px;
    margin-left: auto;
}

.ai {
    gap: 7px;
    width: 127px;
    background: #5a16bd;
    border-radius: 8px;
    font-size: 16px;
    font-weight: 500;
    color: #fff;
}

.beta {
    padding: 0 8px;
    border: 1px solid #fff;
    border-radius: 3px;
    font-size: 10px;
    line-height: 18px;
    font-weight: 700;
}

.support {
    width: 40px;
    background: #6f45b8;
    border-radius: 6px;
    box-shadow: 0 4px 16px rgba(0, 0, 0, 0.15);
}
```
